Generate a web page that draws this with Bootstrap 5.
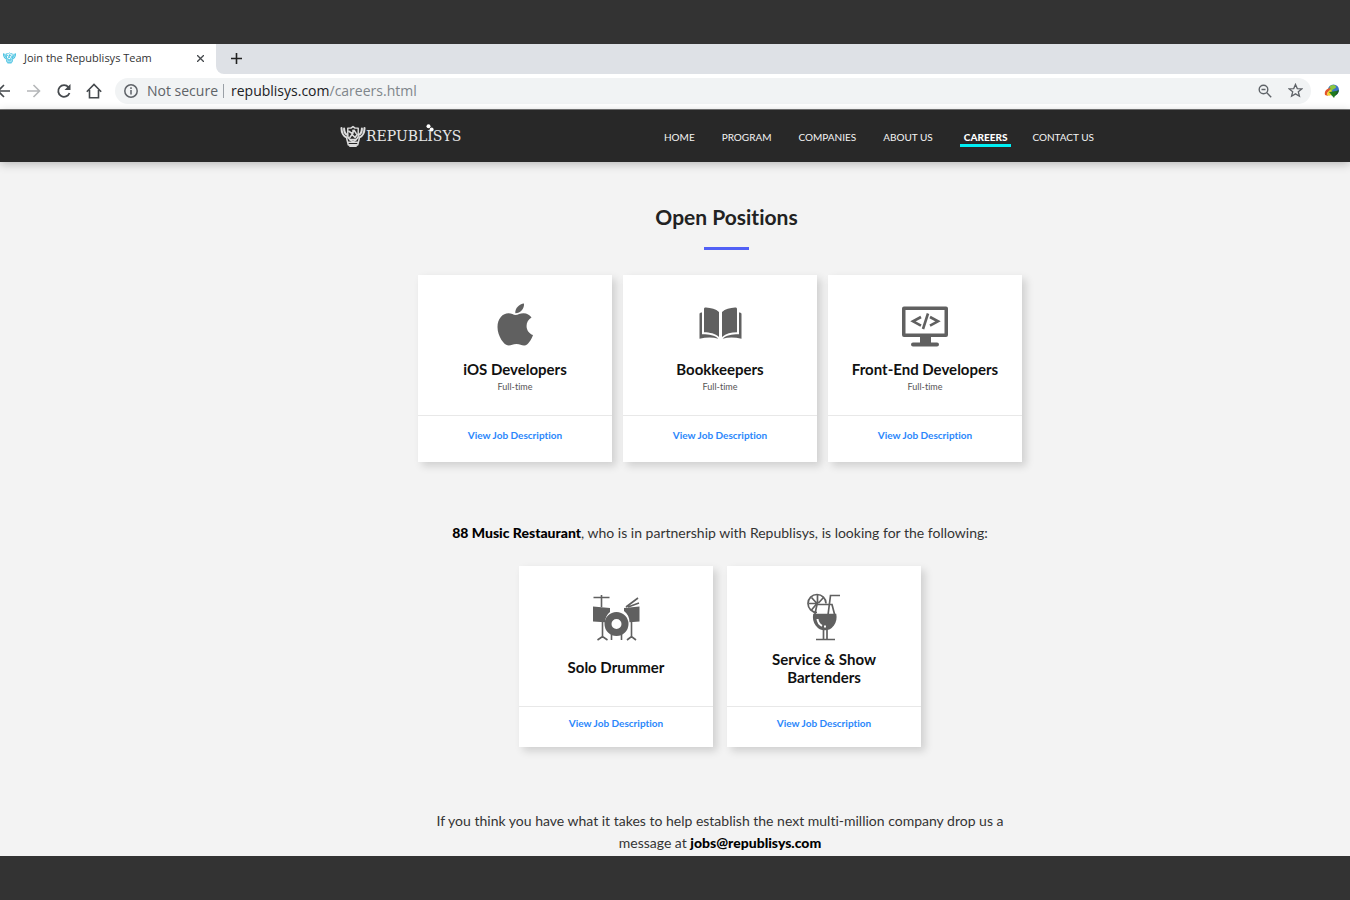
<!DOCTYPE html>
<html lang="en">
<head>
<meta charset="utf-8">
<meta name="viewport" content="width=device-width, initial-scale=1">
<title>Join the Republisys Team</title>
<link rel="stylesheet" href="https://cdn.jsdelivr.net/npm/bootstrap@5.3.0/dist/css/bootstrap.min.css">
<style>
  body { background: #333; font-family: Lato, "Liberation Sans", sans-serif; font-variant-ligatures: none; color: #333; }
  svg { display: block; flex: none; }
  .stage { padding: 44px 0; }

  /* browser chrome */
  .chrome { font-family: "Open Sans", "Noto Sans", sans-serif; background: #fff; border-bottom: 1px solid #777; }
  .tab-strip { background: #dee1e6; height: 30px; }
  .tab-item { background: #fff; width: 216px; font-size: 11px; color: #333; padding: 0 4px 2px 3px; }
  .strip-rest { background: #fff; }
  .strip-fill { background: #dee1e6; border-bottom-left-radius: 8px; padding: 0 0 2px 15px; }
  .plain-btn { background: none; border: 0; padding: 0; color: #45494d; }
  .toolbar { height: 35px; padding: 0 10px 2px 0; }
  .tools { flex: none; width: 119px; margin-left: -4px; gap: 14px; }
  .omnibox { background: #f1f3f4; border-radius: 13px; height: 26px; font-size: 14px; color: #5f6368; margin-right: 13px; }
  .addr-host { color: #202124; }
  .addr-path { color: #80868b; }
  .sep { width: 1px; height: 14px; background: #9aa0a6; margin: 0 7px 0 5px; }

  /* site header */
  .site-nav { background: #282828; min-height: 52px; padding: 0 256px 0 340px; box-shadow: 0 2px 9px rgba(0,0,0,.25); position: relative; }
  .brand-word { font: 14px/20px "DejaVu Serif", serif; color: #e6e6e6; }
  .brand-dots { left: 86px; top: -1px; }
  .site-nav .nav-link { color: #f4f4f4; font-size: 10px; line-height: 14px; padding: 4px 0 0; border-bottom: 3px solid transparent; }
  .site-nav .nav-link.active { color: #fff; font-weight: 900; border-color: #00f0f4; padding: 4px 4px 0; margin-right: -6px; }
  .site-links { gap: 27px; }

  /* page */
  .careers { background: #f3f3f3; padding: 42px 0 0 90px; }
  .page-title { font-size: 21px; line-height: 26px; font-weight: 700; color: #222; margin: 0; }
  .title-rule { width: 45px; height: 3px; background: #5160f5; margin-top: 17px; }
  .title-block { padding-left: 13px; }
  .job { width: 194px; background: #fff; box-shadow: 4px 4px 8px rgba(0,0,0,.15); }
  .job-main { height: 140px; padding-top: 26px; }
  .job-main h2 { font-size: 15px; line-height: 18px; font-weight: 700; color: #111; margin: 0; }
  .openings h2 { padding-top: 9px; }
  .job-main p { font-size: 9px; line-height: 16px; margin: 1px 0 0; color: #555; }
  .job-foot { border-top: 1px solid #e8e8e8; height: 47px; padding-top: 11px; }
  .job-foot a { font-size: 10px; line-height: 16px; font-weight: 700; color: #2b87fb; text-decoration: none; display: block; }
  .openings { gap: 11px; margin-top: 25px; }
  .partner { gap: 14px; margin-top: 22px; }
  .partner .job-foot { height: 41px; padding-top: 8px; }
  .copy { font-size: 14px; line-height: 22px; margin: 0; color: #333; }
  .copy b { font-weight: 900; color: #000; }
  .lead-in { margin-top: 60px; }
  .closing { margin-top: 63px; padding-bottom: 2px; max-width: 600px; }
</style>
</head>
<body>
<svg width="0" height="0" class="position-absolute" aria-hidden="true">
  <symbol id="crest" viewBox="0 0 24 22">
    <g fill="none" stroke="currentColor" stroke-linecap="round" stroke-linejoin="round">
      <path d="M1 3c0 4 2 8 5 9M3.500 3.500c0 3 1 5 3 6M23 3c0 4-2 8-5 9M20.500 3.500c0 3-1 5-3 6" stroke-width="2"/>
      <path d="M7 3h3l2-1.500L14 3h3v8c-1 3-3 4-5 5-2-1-4-2-5-5z" stroke-width="1.400"/>
      <path d="M8 6l3 2 2-3 2 3M9 12l2-3 3 3 2-3M12 5v3M9 14h6M6 13l1.500 6h9L18 13M7 16.500h10M9 20.300h6" stroke-width="1.500"/>
    </g>
  </symbol>
</svg>

<div class="stage min-vh-100">
  <div class="chrome">
    <div class="tab-strip d-flex">
      <div class="tab-item d-flex align-items-center">
        <svg width="13" height="12" class="me-2" style="color:#3fbfe0"><use href="#crest"/></svg>
        <span class="flex-grow-1">Join the Republisys Team</span>
        <button class="plain-btn me-2" aria-label="Close tab"><svg width="7" height="7" viewBox="0 0 8 8" stroke="currentColor" stroke-width="1.500"><path d="M0 0l8 8M8 0L0 8"/></svg></button>
      </div>
      <div class="strip-rest flex-grow-1 d-flex">
        <div class="strip-fill flex-grow-1 d-flex align-items-center">
          <button class="plain-btn" aria-label="New tab"><svg width="11" height="11" viewBox="0 0 11 11" stroke="#222" stroke-width="1.600"><path d="M5.500 0v11M0 5.500h11"/></svg></button>
        </div>
      </div>
    </div>
    <div class="toolbar d-flex align-items-center">
      <div class="tools d-flex align-items-center">
        <button class="plain-btn" aria-label="Back"><svg width="16" height="16" viewBox="0 0 16 16" fill="none" stroke="currentColor" stroke-width="1.600"><path d="M14 8H2M8 2L2 8l6 6"/></svg></button>
        <button class="plain-btn" aria-label="Forward"><svg width="16" height="16" viewBox="0 0 16 16" fill="none" stroke="#b5b7b9" stroke-width="1.600"><path d="M1 8h12M7.500 2l6 6-6 6"/></svg></button>
        <button class="plain-btn" aria-label="Reload"><svg width="16" height="16" viewBox="0 0 16 16" fill="none" stroke="currentColor" stroke-width="1.800"><path d="M13.500 10A5.800 5.800 0 1 1 12.500 4.300"/><path d="M14.500 1v6h-6z" fill="currentColor" stroke="none"/></svg></button>
        <button class="plain-btn" aria-label="Home"><svg width="16" height="16" viewBox="0 0 16 16" fill="none" stroke="currentColor" stroke-width="1.600"><path d="M.8 8.700L8 1.500l7.200 7.200M3.500 7v7.700h9V7"/></svg></button>
      </div>
      <div class="omnibox flex-grow-1 d-flex align-items-center ps-2">
        <svg width="16" height="16" viewBox="0 0 16 16" fill="none" stroke="currentColor" stroke-width="1.500"><circle cx="8" cy="8" r="6.200"/><path d="M8 7v4.500M8 4.300v1.600"/></svg>
        <span class="ms-2">Not secure</span>
        <span class="sep"></span>
        <span class="flex-grow-1"><span class="addr-host">republisys.com</span><span class="addr-path">/careers.html</span></span>
        <button class="plain-btn" aria-label="Zoom"><svg width="14" height="14" viewBox="0 0 14 14" fill="none" stroke="#5f6368" stroke-width="1.400"><circle cx="5.500" cy="5.500" r="4.300"/><path d="M8.800 8.800l4.400 4.400M3.500 5.500h4"/></svg></button>
        <button class="plain-btn ms-3 me-2" aria-label="Bookmark"><svg width="15" height="15" viewBox="0 0 16 16" fill="none" stroke="#5f6368" stroke-width="1.400"><path d="M8 1.500l1.900 4.400 4.800.4-3.700 3.100 1.200 4.700L8 11.600l-4.200 2.500L5 9.400 1.300 6.300l4.800-.4z"/></svg></button>
      </div>
      <button class="plain-btn" aria-label="Download manager extension">
        <svg width="16" height="14" viewBox="0 0 16 14"><circle cx="9.500" cy="6" r="5.500" fill="#3b74c4"/><path d="M6 2c3-2 6-1 6 1s-3 1-4 4-3 2-3 0z" fill="#8cc63e"/><path d="M14.800 6c0 3-2 5-4 6l-1-4z" fill="#1d5c22"/><path d="M1 11C0 7 3 4 7 4L5 7C3 8 3 10 4 12z" fill="#e2552b"/><path d="M3 11c0-3 2-5 4-5l3 6-3-1c-1 1-3 1-4 0z" fill="#f2d22e"/><path d="M5 8l8-1-3 7z" fill="#1f7a1f"/></svg>
      </button>
    </div>
  </div>

  <nav class="site-nav d-flex align-items-center justify-content-between" aria-label="Main">
    <a href="#" class="d-flex align-items-center text-decoration-none position-relative">
      <svg width="26" height="23" style="color:#dcdcdc"><use href="#crest"/></svg>
      <span class="brand-word">REPUBLISYS</span>
      <svg width="8" height="8" class="brand-dots position-absolute" viewBox="0 0 8 8" fill="#fff"><circle cx="2.500" cy="2.200" r="2"/><circle cx="5.600" cy="5.400" r="2"/></svg>
    </a>
    <div class="nav site-links flex-nowrap text-nowrap">
      <a class="nav-link" href="#">HOME</a>
      <a class="nav-link" href="#">PROGRAM</a>
      <a class="nav-link" href="#">COMPANIES</a>
      <a class="nav-link" href="#">ABOUT US</a>
      <a class="nav-link active" href="#" aria-current="page">CAREERS</a>
      <a class="nav-link" href="#">CONTACT US</a>
    </div>
  </nav>

  <main class="careers d-flex flex-column align-items-center text-center">
    <div class="title-block d-flex flex-column align-items-center">
      <h1 class="page-title">Open Positions</h1>
      <div class="title-rule"></div>
    </div>

    <div class="openings d-flex flex-wrap justify-content-center">
      <article class="job">
        <div class="job-main d-flex flex-column align-items-center">
          <svg width="48" height="50" viewBox="0 0 48 50" fill="#606060"><path d="M24.500 14c2.500 0 4.500-1.700 8-1.700 3.500 0 6.200 1.700 8 4.300-7.500 4.500-6 14.500 1.500 17.400-1.500 4.500-5 10.300-8.500 10.500-3 .2-4.300-1.500-8-1.500s-5 1.500-8 1.500C13 44.500 6.500 35 6.500 26c0-8.500 5.300-13.700 11-13.700 3 0 5 1.700 7 1.700z"/><path d="M24.300 12.300c-.5-5 4-9.500 8.700-9.800.6 4.800-3.500 9.800-8.700 9.800z"/></svg>
          <h2>iOS Developers</h2>
          <p>Full-time</p>
        </div>
        <div class="job-foot"><a href="#">View Job Description</a></div>
      </article>
      <article class="job">
        <div class="job-main d-flex flex-column align-items-center">
          <svg width="48" height="50" viewBox="0 0 48 50" fill="#606060"><path d="M8 8C8 7 9 6.500 10 6.600c5 .3 10 1.400 13 4.400v25C19 32.500 14 31.500 8 31.300zM41 8c0-1-1-1.500-2-1.400-5 .3-10 1.400-13 4.400v25c4-3.500 9-4.500 15-4.700zM3.500 13c0-1 1-1.500 2.500-1.500v21.800c6.500-.1 12.800.9 16.300 4.400-5.500-1.700-12-1.700-18.800 0zM45.500 13c0-1-1-1.500-2.500-1.500v21.800c-6.500-.1-12.800.9-16.300 4.400 5.500-1.700 12-1.700 18.800 0z"/></svg>
          <h2>Bookkeepers</h2>
          <p>Full-time</p>
        </div>
        <div class="job-foot"><a href="#">View Job Description</a></div>
      </article>
      <article class="job">
        <div class="job-main d-flex flex-column align-items-center">
          <svg width="48" height="50" viewBox="0 0 48 50" fill="#606060"><path fill-rule="evenodd" d="M3 5.500h42a2 2 0 0 1 2 2V34a2 2 0 0 1-2 2H30v5.500h6a2 2 0 0 1 0 4H12a2 2 0 0 1 0-4h7V36H3a2 2 0 0 1-2-2V7.500a2 2 0 0 1 2-2zM4.500 9v23.500h39V9z"/><path fill="none" stroke="#606060" stroke-width="2.600" d="M20 16l-8 4.300 8 4.300M29 16l8 4.300-8 4.300M27 12.500l-5 15.500"/></svg>
          <h2>Front-End Developers</h2>
          <p>Full-time</p>
        </div>
        <div class="job-foot"><a href="#">View Job Description</a></div>
      </article>
    </div>

    <p class="copy lead-in"><b>88 Music Restaurant</b>, who is in partnership with Republisys, is looking for the following:</p>

    <div class="partner d-flex flex-wrap justify-content-center">
      <article class="job">
        <div class="job-main d-flex flex-column align-items-center">
          <svg width="48" height="50" viewBox="0 0 48 50" fill="#606060" stroke="#606060"><g fill="none" stroke-width="1.600"><path d="M1.500 5.500h16M9.500 3v12M10.500 30v16M5.500 48l5-3.500 5 3.500M39.500 30v16M35 48l4.500-3.500L44 48M19.500 40v8M29.500 40v8M34 15L46 6M36 15l11-4"/></g><path stroke="none" d="M1 14.500l17 1.500v4c-3 2.500-5 6-5 10.300L1 29.500zM47.500 14.500L32 16v3c3.500 2.500 5.500 6.500 5.500 11.200l10-.7z"/><circle cx="24.500" cy="32" r="8.500" fill="#fff" stroke-width="7"/></svg>
          <h2 class="mt-3">Solo Drummer</h2>
        </div>
        <div class="job-foot"><a href="#">View Job Description</a></div>
      </article>
      <article class="job">
        <div class="job-main d-flex flex-column align-items-center">
          <svg width="48" height="50" viewBox="0 0 48 50" fill="none" stroke="#606060" stroke-width="1.700"><path d="M17 20.500a9 9 0 1 1 9-9"/><path d="M17.500 3v9M9 11.500h8.500M11.500 5.500l5.500 6M23.500 5.500l-5 5.500M11.500 18l5-6"/><path d="M17 12.500h15l3 11.500M17 12.500L14.500 24M28 23l2.500-19.500H40"/><path fill="#606060" d="M14 22.500h21.500c1.500 8-4 15-10.700 15S12.500 30.500 14 22.500z"/><path stroke="#fff" stroke-width="2" d="M17.500 27c.3 3 2 5.500 4.500 6.800M24 34.500h2"/><path d="M23.500 38v9M27 38v9M16 47.500h19"/></svg>
          <h2 class="mt-2 px-4">Service &amp; Show Bartenders</h2>
        </div>
        <div class="job-foot"><a href="#">View Job Description</a></div>
      </article>
    </div>

    <p class="copy closing">If you think you have what it takes to help establish the next multi-million company drop us a message at <b>jobs@republisys.com</b></p>
  </main>
</div>
<script src="https://cdn.jsdelivr.net/npm/bootstrap@5.3.0/dist/js/bootstrap.bundle.min.js"></script>
</body>
</html>
